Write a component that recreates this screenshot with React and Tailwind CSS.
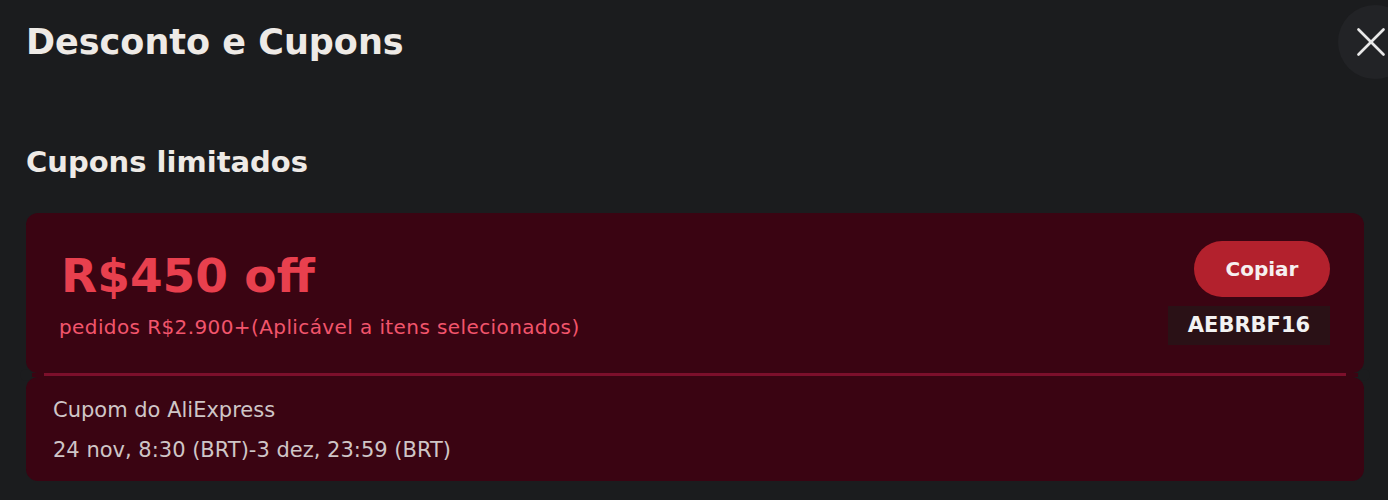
// Painel de descontos e cupons
import { X } from "lucide-react";

const font = { fontFamily: "'DejaVu Sans', 'Open Sans', sans-serif" };

function CouponCard({ value, rule, code, source, period }) {
    return (
        <div className="relative">
            <div className="bg-[#3a0412] rounded-xl flex items-start justify-between pl-[35px] pr-[34px] pt-[28px] pb-[28px]">
                <div className="mt-[8px]">
                    <div className="text-[47px] leading-[54px] font-bold text-[#e8404e]">{value}</div>
                    <div className="text-[20px] leading-6 text-[#f2556c] mt-[12px] tracking-[0.4px] -ml-[2px]">{rule}</div>
                </div>
                <div className="flex flex-col items-end gap-[9px]">
                    <button className="w-[136px] h-[56px] rounded-full bg-[#b3212d] text-[#f6f0f0] text-[20px] font-bold">Copiar</button>
                    <div className="w-[162px] h-[39px] bg-[#2a1116] flex items-center justify-center text-[21px] font-bold text-[#f2f2f2]">{code}</div>
                </div>
            </div>
            {/* linha divisória com os recortes laterais */}
            <div className="relative h-[4px] bg-[#3a0412] mx-[6px]">
                <div className="absolute left-[12px] right-[12px] top-[0px] h-[3px] bg-[#7c0f2b]" />
            </div>
            <div className="absolute left-[-6px] top-[156px] w-[12px] h-[12px] rounded-full bg-[#1b1c1e]" />
            <div className="absolute right-[-6px] top-[156px] w-[12px] h-[12px] rounded-full bg-[#1b1c1e]" />
            <div className="bg-[#3a0412] rounded-xl px-[27px] pt-[21px] pb-[19px] text-[21px] text-[#cfc6c7]">
                <div className="leading-[24px]">{source}</div>
                <div className="leading-[24px] mt-[16px]">{period}</div>
            </div>
        </div>
    );
}

export default function App() {
    return (
        <div className="w-[1388px] h-[500px] overflow-hidden bg-[#1b1c1e]" style={font}>
            <div className="flex items-start justify-between pl-[26px]">
                <h1 className="text-[35px] leading-[44px] font-bold text-[#eeeae6] mt-[20px]">Desconto e Cupons</h1>
                <button className="w-[74px] h-[74px] shrink-0 rounded-full bg-[#222326] flex items-center justify-center pr-2 mt-[5px] mr-[-24px] text-[#e8e8e8]">
                    <X className="w-[50px] h-[50px]" strokeWidth={1.3} />
                </button>
            </div>
            <div className="px-[24px]">
                <h2 className="text-[29px] leading-[36px] font-bold text-[#eeeae6] mt-[65px] pl-[2px]">Cupons limitados</h2>
                <div className="mt-[33px] ml-[2px]">
                    <CouponCard
                        value="R$450 off"
                        rule="pedidos R$2.900+(Aplicável a itens selecionados)"
                        code="AEBRBF16"
                        source="Cupom do AliExpress"
                        period="24 nov, 8:30 (BRT)-3 dez, 23:59 (BRT)"
                    />
                </div>
            </div>
        </div>
    );
}
